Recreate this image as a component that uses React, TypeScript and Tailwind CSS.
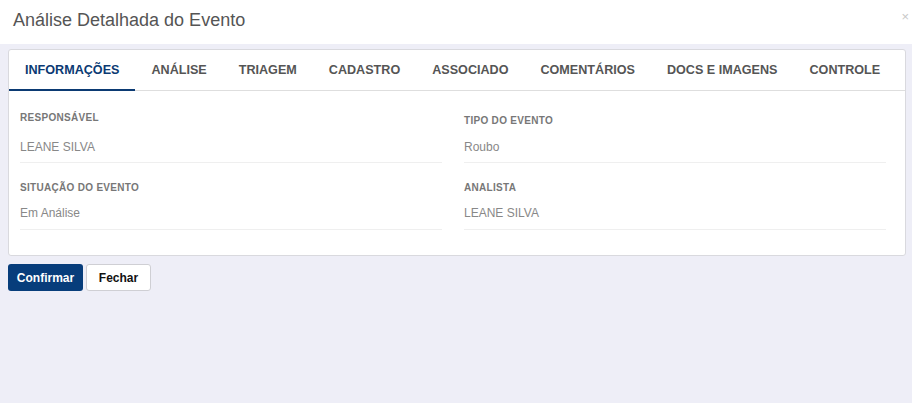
import React, { useState } from "react";

const tabs = [
  "INFORMAÇÕES",
  "ANÁLISE",
  "TRIAGEM",
  "CADASTRO",
  "ASSOCIADO",
  "COMENTÁRIOS",
  "DOCS E IMAGENS",
  "CONTROLE",
];

function Field({
  label,
  value,
  labelClass = "",
  valueClass = "",
}: {
  label: string;
  value: string;
  labelClass?: string;
  valueClass?: string;
}) {
  return (
    <div>
      <div className={`text-[10px] font-bold tracking-[0.3px] text-[#777] leading-[14px] ${labelClass}`}>{label}</div>
      <div className={`text-[12px] text-[#888] leading-[14px] border-b border-[#efefef] ${valueClass}`}>{value}</div>
    </div>
  );
}

export default function App() {
  const [active, setActive] = useState(0);

  return (
    <div className="w-[912px] h-[403px] bg-[#eeeef7] font-['Liberation_Sans',Arial,sans-serif] overflow-hidden">
      {/* Header */}
      <div className="h-[44px] bg-white flex items-center justify-between pl-[13px] pr-[3px]">
        <h1 className="text-[18px] text-[#555] font-normal leading-none -mt-[4px]">Análise Detalhada do Evento</h1>
        <button className="text-[13px] text-[#c8c8c8] leading-none -mt-[12px]">×</button>
      </div>

      <div className="pt-[5px] pl-[8px] pr-[6px]">
        {/* Card */}
        <div className="bg-white border border-[#d9d9de] rounded-[3px] h-[207px]">
          <div className="flex h-[41px] border-b border-[#dedede]">
            {tabs.map((t, i) => (
              <button
                key={t}
                onClick={() => setActive(i)}
                className={`px-[16px] text-[12.6px] font-bold leading-none pt-[1px] whitespace-nowrap ${
                  i === active ? "text-[#0b3a73] border-b-2 border-[#0b3a73] -mb-px" : "text-[#555]"
                }`}
              >
                {t}
              </button>
            ))}
          </div>

          <div className="grid grid-cols-2 gap-x-[22px] pl-[11px] pr-[19px] pt-[20px]">
            <Field label="RESPONSÁVEL" value="LEANE SILVA" valueClass="mt-[15px] pb-[8px]" />
            <Field label="TIPO DO EVENTO" value="Roubo" labelClass="mt-[3px]" valueClass="mt-[12px] pb-[8px]" />
            <div className="mt-[18px]">
              <Field label="SITUAÇÃO DO EVENTO" value="Em Análise" valueClass="mt-[11px] pb-[9px]" />
            </div>
            <div className="mt-[18px]">
              <Field label="ANALISTA" value="LEANE SILVA" valueClass="mt-[11px] pb-[9px]" />
            </div>
          </div>
        </div>

        {/* Buttons */}
        <div className="flex gap-[3px] mt-[8px]">
          <button className="h-[27px] w-[75px] bg-[#073d7b] text-white text-[12px] font-bold rounded-[3px]">
            Confirmar
          </button>
          <button className="h-[27px] w-[65px] bg-white text-[#111] text-[12px] font-bold rounded-[3px] border border-[#cfcfd4]">
            Fechar
          </button>
        </div>
      </div>
    </div>
  );
}
